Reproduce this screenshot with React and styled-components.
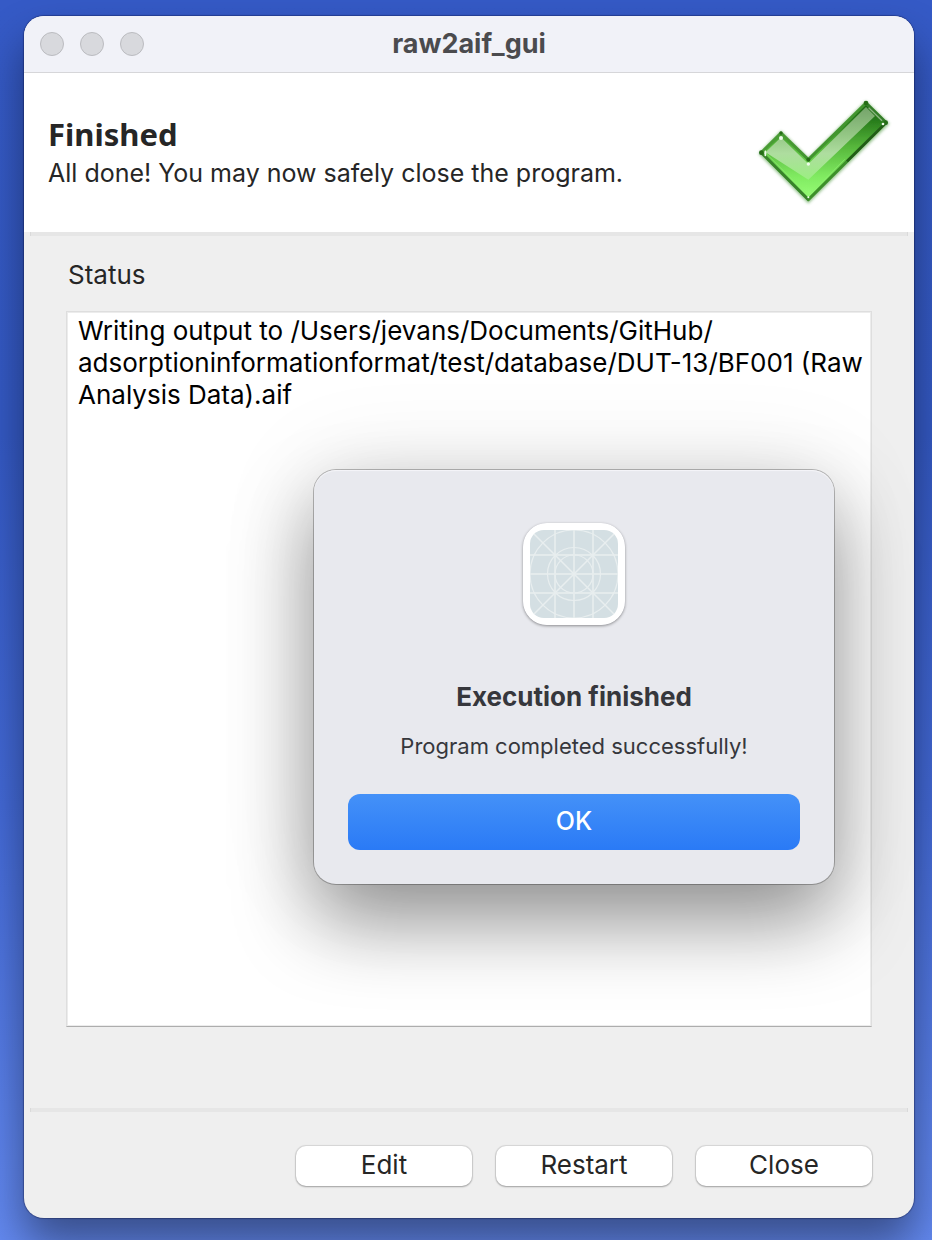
import React from 'react';
import styled, { createGlobalStyle } from 'styled-components';

const GlobalStyle = createGlobalStyle`
  *, *::before, *::after { box-sizing: border-box; }
  body {
    margin: 0;
    font-family: Inter, "Liberation Sans", sans-serif;
    font-size: 26px;
    line-height: 32px;
    color: #262626;
  }
  h1, h2, p { margin: 0; }
`;

const Desktop = styled.div`
  min-height: 100vh;
  display: flex;
  padding: 16px 18px 22px 24px;
  overflow: hidden;
  background: linear-gradient(#355ac6 0%, #3459c4 35%, #4369d6 65%, #6389f0 100%);
`;

const Window = styled.main`
  position: relative;
  flex: 1;
  min-width: 0;
  display: flex;
  flex-direction: column;
  border-radius: 20px;
  background: #efefef;
  box-shadow: 0 0 1px 1px rgba(0, 0, 40, 0.3), 0 26px 44px rgba(0, 0, 0, 0.42);
`;

const TitleBar = styled.header`
  display: grid;
  grid-template-columns: 1fr auto 1fr;
  align-items: center;
  height: 57px;
  padding: 0 16px;
  border-bottom: 1px solid #d6d6d9;
  border-radius: 20px 20px 0 0;
  background: #f1f2f8;
`;

const Lights = styled.div`
  display: flex;
  gap: 16px;
`;

const Light = styled.button`
  width: 24px;
  height: 24px;
  padding: 0;
  border: 1px solid #bbbcc0;
  border-radius: 50%;
  background: #d8d9dd;
`;

const Title = styled.h1`
  padding-bottom: 1px;
  font-size: 27px;
  font-weight: 700;
  color: #4b4b4e;
`;

const Banner = styled.section`
  display: flex;
  align-items: center;
  justify-content: space-between;
  height: 159px;
  padding: 0 22px 0 24px;
  background: #fff;
`;

const Heading = styled.h2`
  padding-bottom: 6px;
  font-family: "Noto Sans", sans-serif;
  font-size: 31px;
  line-height: 34px;
  font-weight: 700;
`;

const Summary = styled.p`
  font-size: 25px;
`;

const Check = styled.svg`
  flex: none;
  width: 136px;
  height: 110px;
`;

const Divider = styled.hr`
  flex: none;
  height: 4px;
  margin: 0 6px;
  border: 0;
  border-left: 1px solid #dadada;
  border-right: 1px solid #dadada;
  background: #e6e6e6;
  align-self: stretch;
`;

const Content = styled.section`
  flex: 1;
  display: flex;
  flex-direction: column;
  gap: 20px;
  padding: 23px 42px 81px;
`;

const Label = styled.label`
  padding-left: 2px;
`;

const Output = styled.textarea`
  flex: 1;
  width: 100%;
  min-height: 400px;
  padding: 3px 3px 3px 11px;
  border: 1px solid #dedede;
  border-bottom-color: #adadad;
  border-radius: 0;
  outline: 0;
  resize: none;
  background: #fff;
  box-shadow: inset 0 0 0 1px #ececec;
  font: inherit;
  color: #000;
`;

const Actions = styled.footer`
  display: flex;
  justify-content: flex-end;
  gap: 24px;
  padding: 34px 42px 32px;
`;

const Button = styled.button`
  width: 176px;
  height: 40px;
  padding: 0 0 2px;
  border: 0;
  border-radius: 10px;
  background: #fff;
  box-shadow: 0 0 1px 1px rgba(0, 0, 0, 0.1), 0 1px 2px rgba(0, 0, 0, 0.26);
  font: inherit;
  color: inherit;
`;

const Dialog = styled.section`
  position: absolute;
  top: 454px;
  right: 80px;
  width: 520px;
  display: flex;
  flex-direction: column;
  align-items: center;
  padding: 53px 34px 34px;
  border-radius: 22px;
  background: #e8e9ee;
  box-shadow: 0 0 0 1px rgba(0, 0, 0, 0.26), inset 0 1px 1px #f6f6f9,
    0 38px 80px rgba(0, 0, 0, 0.4), 0 0 100px rgba(0, 0, 0, 0.1);
  color: #36373c;
`;

const AppIcon = styled.svg`
  width: 102px;
  height: 102px;
  border-radius: 24px;
  box-shadow: 0 1px 3px rgba(0, 0, 0, 0.4);
`;

const DialogTitle = styled.h2`
  margin-top: 56px;
  font-size: 26px;
  line-height: 32px;
  font-weight: 700;
`;

const Message = styled.p`
  margin-top: 17px;
  font-size: 22px;
`;

const Primary = styled(Button)`
  width: 100%;
  height: 56px;
  margin-top: 32px;
  border-radius: 12px;
  background: linear-gradient(#4491f8, #2a7af6);
  box-shadow: none;
  font-size: 25px;
  font-weight: 500;
  color: #fff;
`;

function CheckMark() {
  return (
    <Check viewBox="72 83 408 330" aria-hidden="true">
      <defs>
        <linearGradient id="body" gradientUnits="userSpaceOnUse" x1="240" y1="100" x2="240" y2="390">
          <stop offset="0" stopColor="#1d6511" />
          <stop offset="0.16" stopColor="#26791a" />
          <stop offset="0.45" stopColor="#57b83c" />
          <stop offset="0.75" stopColor="#80ea61" />
          <stop offset="1" stopColor="#9aff79" />
        </linearGradient>
        <linearGradient id="gloss" gradientUnits="userSpaceOnUse" x1="240" y1="100" x2="240" y2="330">
          <stop offset="0" stopColor="#719f67" />
          <stop offset="0.4" stopColor="#93c684" />
          <stop offset="0.65" stopColor="#aedd9f" />
          <stop offset="1" stopColor="#9bef81" />
        </linearGradient>
        <linearGradient id="edge" gradientUnits="userSpaceOnUse" x1="150" y1="160" x2="310" y2="320">
          <stop offset="0" stopColor="#4a9c35" />
          <stop offset="1" stopColor="#3d8f2b" />
        </linearGradient>
        <filter id="soft" x="-10%" y="-10%" width="120%" height="120%">
          <feGaussianBlur stdDeviation="5" />
        </filter>
        <filter id="fine" x="-10%" y="-10%" width="120%" height="120%">
          <feGaussianBlur stdDeviation="2" />
        </filter>
      </defs>
      <path
        d="M88 250 147 190 229 270 402 100 464 160 229 391Z"
        fill="none"
        stroke="#4a963a"
        strokeWidth="12"
        opacity="0.6"
        filter="url(#soft)"
      />
      <g filter="url(#fine)">
        <path
          d="M88 247 147 188 229 268 402 98 462 157 229 388Z"
          fill="url(#body)"
          stroke="url(#edge)"
          strokeWidth="9"
          strokeLinejoin="round"
        />
        <path d="M99 247 147 201 229 281 402 110 429 137 229 328 103 247Z" fill="url(#gloss)" />
        <path d="M88 247 229 388" stroke="#37822a" strokeWidth="7" />
        <path d="M462 157 345 273" stroke="#205c16" strokeWidth="8" />
        <path d="M404 100 462 157" stroke="#347b2a" strokeWidth="7" />
        <path d="M410 112 450 151" stroke="#8cb681" strokeWidth="4" />
        <path d="M104 251 229 375 338 267" fill="none" stroke="#90ee72" strokeWidth="3" opacity="0.6" />
        <g fill="#256d19">
          <circle cx="88" cy="247" r="7" />
          <circle cx="402" cy="98" r="7" />
          <circle cx="461" cy="157" r="7" />
          <circle cx="229" cy="268" r="6" />
          <circle cx="147" cy="188" r="5" />
        </g>
        <g fill="#eefbea">
          <circle cx="147" cy="203" r="6" />
          <circle cx="229" cy="281" r="5" />
          <ellipse cx="100" cy="249" rx="3" ry="9" />
          <circle cx="453" cy="161" r="4" />
          <circle cx="229" cy="381" r="3" />
        </g>
      </g>
    </Check>
  );
}

function GridIcon() {
  return (
    <AppIcon viewBox="0 0 102 102" aria-hidden="true">
      <defs>
        <clipPath id="tile">
          <rect x="7" y="7" width="88" height="88" rx="14" />
        </clipPath>
      </defs>
      <rect width="102" height="102" rx="24" fill="#fff" />
      <rect x="7" y="7" width="88" height="88" rx="14" fill="#d4dfe3" />
      <g clipPath="url(#tile)" fill="none" stroke="#e4ebec">
        <path
          strokeWidth="2"
          d="M32 7V95M51 7V95M70 7V95M7 32H95M7 51H95M7 70H95"
        />
        <path strokeWidth="1.5" stroke="#e8eeef" d="M7 7 95 95M95 7 7 95" />
        <g strokeWidth="1.2" stroke="#e8eeef">
          <circle cx="51" cy="51" r="44" />
          <circle cx="51" cy="51" r="26.5" />
          <circle cx="51" cy="51" r="19" />
        </g>
      </g>
    </AppIcon>
  );
}

const OUTPUT_TEXT =
  'Writing output to /Users/jevans/Documents/GitHub/\nadsorptioninformationformat/test/database/DUT-13/BF001 (Raw Analysis Data).aif';

export default function App() {
  return (
    <>
      <GlobalStyle />
      <Desktop>
        <Window>
          <TitleBar>
            <Lights>
              <Light type="button" aria-label="Close window" />
              <Light type="button" aria-label="Minimize window" />
              <Light type="button" aria-label="Zoom window" />
            </Lights>
            <Title>raw2aif_gui</Title>
          </TitleBar>
          <Banner>
            <div>
              <Heading>Finished</Heading>
              <Summary>All done! You may now safely close the program.</Summary>
            </div>
            <CheckMark />
          </Banner>
          <Divider />
          <Content>
            <Label htmlFor="status">Status</Label>
            <Output id="status" readOnly spellCheck={false} value={OUTPUT_TEXT} />
          </Content>
          <Divider />
          <Actions>
            <Button type="button">Edit</Button>
            <Button type="button">Restart</Button>
            <Button type="button">Close</Button>
          </Actions>
          <Dialog role="alertdialog" aria-labelledby="dialog-title" aria-describedby="dialog-message">
            <GridIcon />
            <DialogTitle id="dialog-title">Execution finished</DialogTitle>
            <Message id="dialog-message">Program completed successfully!</Message>
            <Primary type="button">OK</Primary>
          </Dialog>
        </Window>
      </Desktop>
    </>
  );
}
